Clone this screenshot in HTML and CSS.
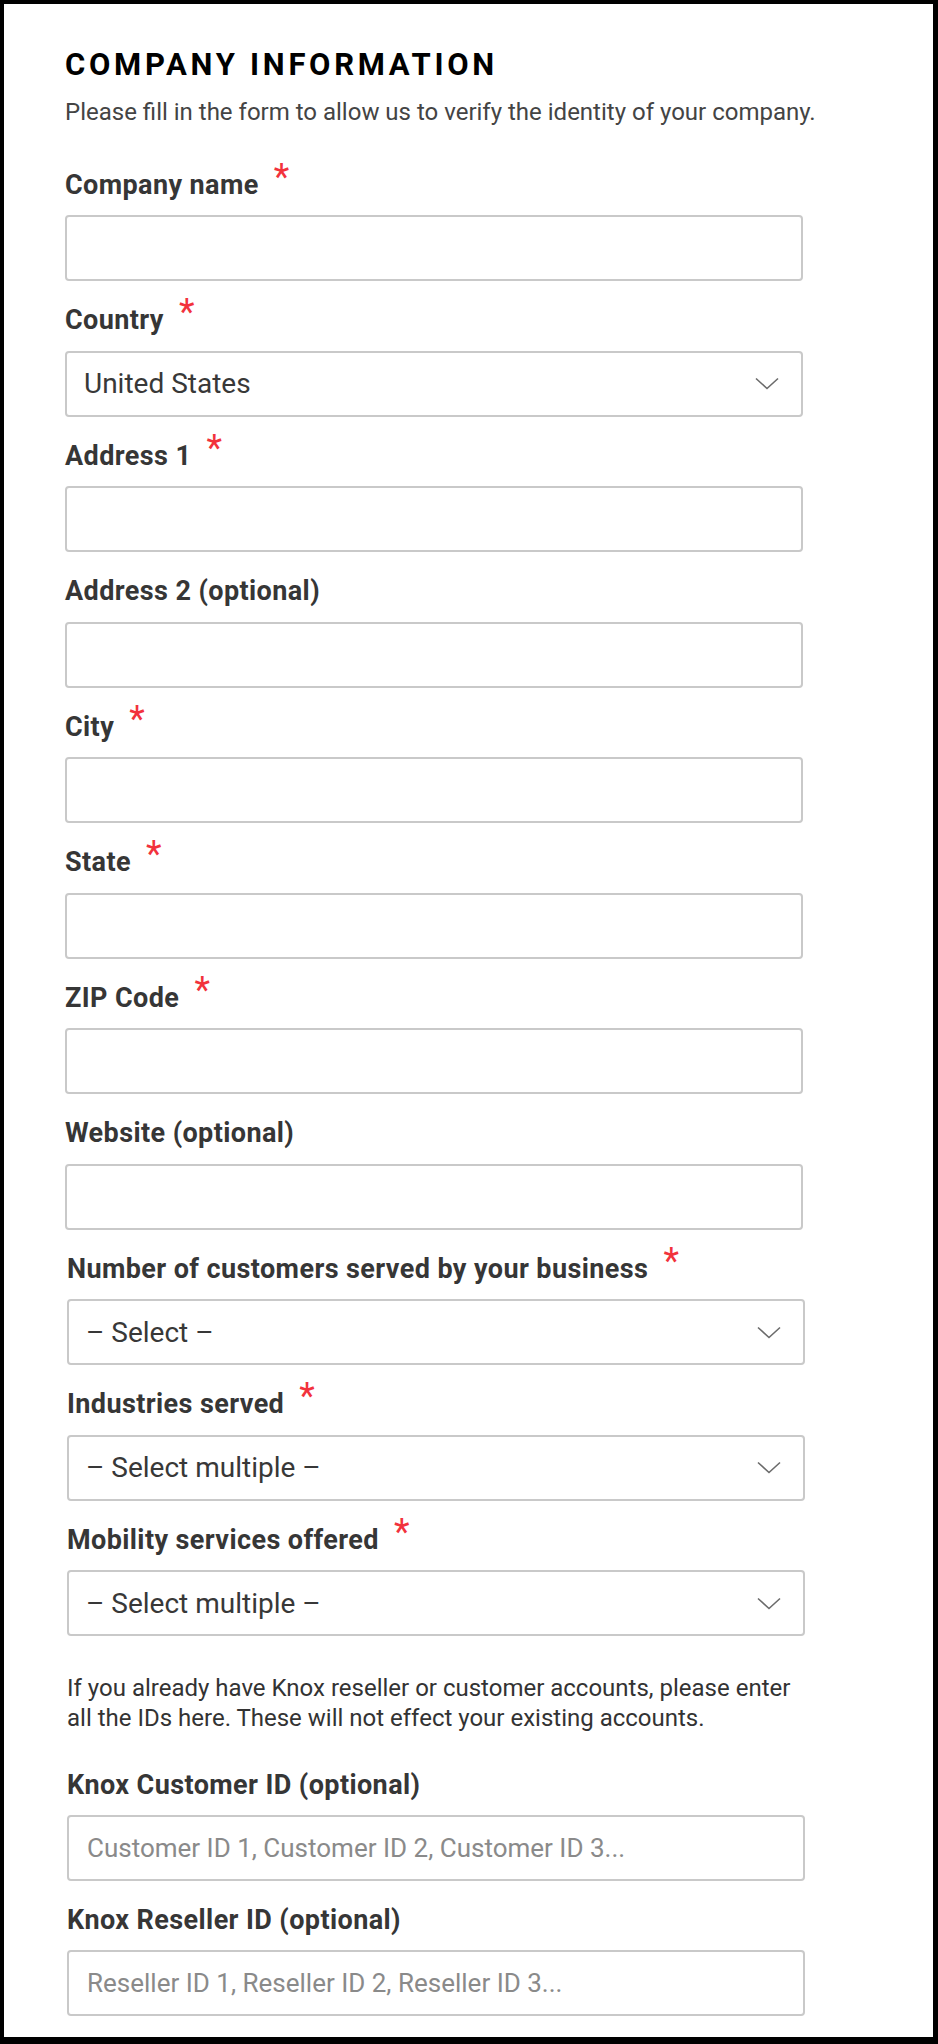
FILE: index.html
```html
<!DOCTYPE html>
<html lang="en">
<head>
<meta charset="utf-8">
<title>Company information</title>
<link rel="stylesheet" href="styles.css">
</head>
<body>
<div class="frame">
  <form class="form">
    <h1 class="title">COMPANY INFORMATION</h1>
    <p class="intro">Please fill in the form to allow us to verify the identity of your company.</p>

    <div class="group">
      <div class="field">
        <label class="label">Company name <span class="req">*</span></label>
        <input class="input" type="text">
      </div>
      <div class="field">
        <label class="label">Country <span class="req">*</span></label>
        <div class="select"><span class="select-text">United States</span><svg class="chev" width="24" height="13" viewBox="0 0 24 13"><path d="M1 1.5 L12 11.5 L23 1.5" fill="none" stroke="#6b6b6b" stroke-width="1.6"/></svg></div>
      </div>
      <div class="field">
        <label class="label">Address 1 <span class="req">*</span></label>
        <input class="input" type="text">
      </div>
      <div class="field">
        <label class="label">Address 2 (optional)</label>
        <input class="input" type="text">
      </div>
      <div class="field">
        <label class="label">City <span class="req">*</span></label>
        <input class="input" type="text">
      </div>
      <div class="field">
        <label class="label">State <span class="req">*</span></label>
        <input class="input" type="text">
      </div>
      <div class="field">
        <label class="label">ZIP Code <span class="req">*</span></label>
        <input class="input" type="text">
      </div>
      <div class="field">
        <label class="label">Website (optional)</label>
        <input class="input" type="text">
      </div>
    </div>

    <div class="group-b">
      <div class="field">
        <label class="label">Number of customers served by your business <span class="req">*</span></label>
        <div class="select"><span class="select-text">– Select –</span><svg class="chev" width="24" height="13" viewBox="0 0 24 13"><path d="M1 1.5 L12 11.5 L23 1.5" fill="none" stroke="#6b6b6b" stroke-width="1.6"/></svg></div>
      </div>
      <div class="field">
        <label class="label">Industries served <span class="req">*</span></label>
        <div class="select"><span class="select-text">– Select multiple –</span><svg class="chev" width="24" height="13" viewBox="0 0 24 13"><path d="M1 1.5 L12 11.5 L23 1.5" fill="none" stroke="#6b6b6b" stroke-width="1.6"/></svg></div>
      </div>
      <div class="field">
        <label class="label">Mobility services offered <span class="req">*</span></label>
        <div class="select"><span class="select-text">– Select multiple –</span><svg class="chev" width="24" height="13" viewBox="0 0 24 13"><path d="M1 1.5 L12 11.5 L23 1.5" fill="none" stroke="#6b6b6b" stroke-width="1.6"/></svg></div>
      </div>

      <p class="note">If you already have Knox reseller or customer accounts, please enter all the IDs here. These will not effect your existing accounts.</p>

      <div class="field field-knox">
        <label class="label">Knox Customer ID (optional)</label>
        <input class="input" type="text" placeholder="Customer ID 1, Customer ID 2, Customer ID 3...">
      </div>
      <div class="field">
        <label class="label">Knox Reseller ID (optional)</label>
        <input class="input" type="text" placeholder="Reseller ID 1, Reseller ID 2, Reseller ID 3...">
      </div>
    </div>
  </form>
</div>
</body>
</html>
```
FILE: styles.css
```css
* { box-sizing: border-box; }
html, body { margin: 0; padding: 0; background: #fff; }
body { font-family: Roboto, "Liberation Sans", Arial, sans-serif; }

.frame {
  width: 938px;
  height: 2044px;
  border-style: solid;
  border-color: #000;
  border-width: 4px 5px 7px 4px;
  overflow: hidden;
}

.form {
  padding: 42px 0 0 61px;
}

.title {
  margin: 0;
  font-size: 31px;
  line-height: 38px;
  font-weight: 700;
  letter-spacing: 3.7px;
  color: #000;
}

.intro {
  margin: 14px 0 0;
  font-size: 24px;
  line-height: 28px;
  color: #444;
  white-space: nowrap;
}

.group { margin-top: 19.5px; }
.group-b { padding-left: 2px; }

.field { padding-top: 24px; }

.label {
  display: block;
  font-size: 27px;
  line-height: 30px;
  font-weight: 700;
  letter-spacing: 0.4px;
  color: #363636;
  margin-bottom: 15.5px;
}

.req {
  display: inline-block;
  vertical-align: top;
  margin-left: 8px;
  margin-top: -8px;
  font-size: 36px;
  line-height: 30px;
  font-weight: 400;
  letter-spacing: 0;
  color: #f2323c;
}

.input, .select {
  display: block;
  width: 738px;
  height: 66px;
  border: 2px solid #c9c9c9;
  border-radius: 4px;
  background: #fff;
  font-family: Roboto, "Liberation Sans", Arial, sans-serif;
  font-size: 26px;
  color: #333;
  padding: 0 18px;
  margin: 0;
  outline: none;
}

.input::placeholder { color: #8a8a8a; }

.select {
  display: flex;
  align-items: center;
  justify-content: space-between;
  padding: 0 22px 0 17px;
  font-size: 28px;
}

.select-text { color: #383838; }

.chev { flex: none; }

.note {
  margin: 37px 0 0;
  font-size: 24px;
  line-height: 30px;
  color: #333;
  width: 738px;
}

.field-knox { padding-top: 37px; }
.field-knox .label { margin-bottom: 14.5px; }
```
